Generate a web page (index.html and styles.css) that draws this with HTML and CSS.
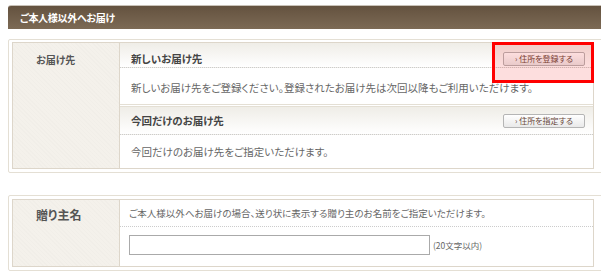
FILE: index.html
```html
<!DOCTYPE html>
<html lang="ja">
<head>
  <meta charset="UTF-8">
  <title>ご本人様以外へお届け</title>
  <link rel="stylesheet" href="styles.css">
</head>
<body>
  <div class="page">
    <h2 class="heading">ご本人様以外へお届け</h2>

    <div class="box box-dest">
      <div class="table">
        <div class="label">お届け先</div>
        <div class="content">
          <div class="row">
            <div class="row-head head-first">
              <span>新しいお届け先</span>
              <button class="btn">› 住所を登録する</button>
            </div>
            <div class="row-body body-first">新しいお届け先をご登録ください。登録されたお届け先は次回以降もご利用いただけます。</div>
          </div>
          <div class="row row-next">
            <div class="row-head head-next">
              <span>今回だけのお届け先</span>
              <button class="btn">› 住所を指定する</button>
            </div>
            <div class="row-body body-next">今回だけのお届け先をご指定いただけます。</div>
          </div>
        </div>
      </div>
      <div class="mark"></div>
    </div>

    <div class="box box-sender">
      <div class="table">
        <div class="label label-big">贈り主名</div>
        <div class="content">
          <div class="note">ご本人様以外へお届けの場合、送り状に表示する贈り主のお名前をご指定いただけます。</div>
          <div class="field">
            <input type="text" class="name-input">
            <span class="limit">(20文字以内)</span>
          </div>
        </div>
      </div>
    </div>
  </div>
</body>
</html>
```

FILE: styles.css
```css
* { box-sizing: border-box; }
html, body { overflow: hidden; }
body {
  margin: 0;
  background: #fff;
  font-family: "Noto Sans CJK JP", "Noto Sans", sans-serif;
  font-feature-settings: "palt";
  color: #555;
}
.page {
  padding: 5px 0 0 8px;
  width: 610px;
}
.heading {
  margin: 0;
  height: 24px;
  padding-left: 12px;
  line-height: 24px;
  font-size: 10px;
  font-weight: bold;
  color: #fff;
  letter-spacing: -0.3px;
  background: linear-gradient(#64523f, #7c6a55);
  border-top: 1px solid #c9c2b8;
  border-radius: 3px 0 0 0;
}
.box {
  position: relative;
  border: 1px solid #e4dfd4;
  border-radius: 2px;
  padding: 2px 3px 3px;
}
.box-dest { margin-top: 10px; }
.box-sender { margin-top: 22px; padding-top: 3px; }
.table {
  display: flex;
  width: 582px;
  border: 1px solid #ddd6ca;
}
.label {
  width: 107px;
  flex: none;
  padding: 9px 0 0 23px;
  font-size: 10px;
  font-weight: bold;
  line-height: 16px;
  color: #555;
  border-right: 1px solid #ddd6ca;
  background: #f4f1eb repeating-linear-gradient(45deg, rgba(0,0,0,0.012) 0 1px, transparent 1px 3px);
}
.label-big {
  padding-top: 7px;
  font-size: 12px;
  line-height: 16px;
}
.content {
  flex: 1;
  background: #fff;
}
.row-head {
  display: flex;
  justify-content: space-between;
  align-items: center;
  padding: 8px 8px 1px 11px;
  font-size: 10.5px;
  font-weight: bold;
  line-height: 15px;
  color: #444;
  background: linear-gradient(#efede7, #fff);
  border-bottom: 1px dotted #ccc;
}
.head-next { padding-top: 6px; padding-bottom: 6px; }
.row-body {
  padding: 13px 11px 9px;
  font-size: 10.5px;
  line-height: 14px;
  color: #666;
}
.body-next { padding-top: 10px; padding-bottom: 9px; }
.row-next { border-top: 3px double #e4dfd4; }
.btn {
  width: 82px;
  height: 14px;
  padding: 0;
  font-family: inherit;
  font-feature-settings: "palt";
  font-size: 8px;
  line-height: 12px;
  color: #6a4a3c;
  background: linear-gradient(#fff, #e9e9e9);
  border: 1px solid #b5b5b5;
  border-radius: 2px;
}
.note {
  padding: 6px 9px 6px;
  font-size: 9.5px;
  line-height: 14px;
  color: #666;
  border-bottom: 1px dotted #ccc;
}
.field {
  display: flex;
  align-items: center;
  padding: 8px 9px 11px;
}
.name-input {
  width: 301px;
  height: 20px;
  border: 1px solid #aaa;
  border-radius: 0;
}
.limit {
  margin-left: 3px;
  font-size: 8.5px;
  color: #666;
}
.mark {
  position: absolute;
  left: 483px;
  top: 2px;
  width: 102px;
  height: 41px;
  border: 3px solid #f00;
  background: rgba(240, 0, 0, 0.13);
}
```
